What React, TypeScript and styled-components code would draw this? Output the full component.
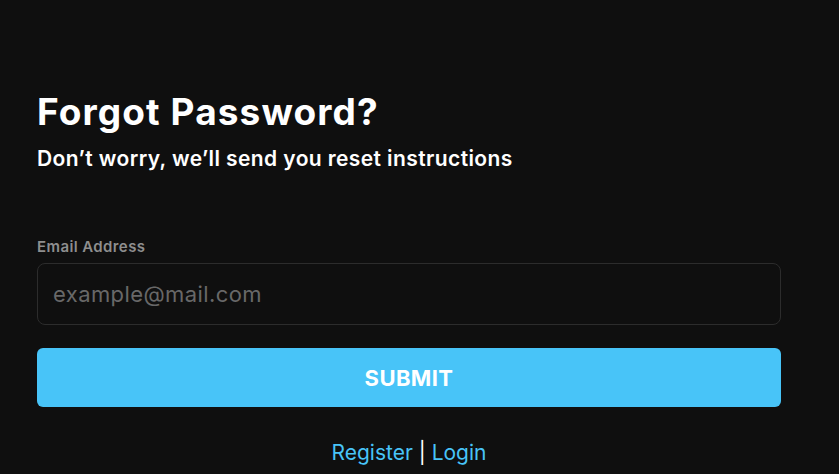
import React from "react";
import styled, { createGlobalStyle } from "styled-components";

const Global = createGlobalStyle`
  html, body {
    margin: 0;
    padding: 0;
    background: #0f0f0f;
    font-family: "Inter", "Open Sans", sans-serif;
  }
`;

const Page = styled.main`
  min-height: 474px;
  padding: 88px 58px 0 37px;
  box-sizing: border-box;
`;

const Title = styled.h1`
  margin: 0;
  color: #ffffff;
  font-size: 37px;
  font-weight: 700;
  line-height: 48px;
  letter-spacing: 1.1px;
`;

const Subtitle = styled.h2`
  margin: 9px 0 0;
  color: #ffffff;
  font-size: 21px;
  font-weight: 600;
  line-height: 28px;
  letter-spacing: 0.4px;
`;

const Form = styled.form`
  margin-top: 64px;
  display: flex;
  flex-direction: column;
`;

const Label = styled.label`
  color: #8e8e8e;
  font-size: 15px;
  font-weight: 600;
  line-height: 20px;
  letter-spacing: 0.4px;
  margin-bottom: 6px;
`;

const Input = styled.input`
  height: 62px;
  box-sizing: border-box;
  background: #0f0f0f;
  border: 1px solid #2c2c2c;
  border-radius: 8px;
  padding: 0 15px;
  color: #fff;
  font-family: inherit;
  font-size: 22px;
  letter-spacing: 0.4px;
  outline: none;

  &::placeholder {
    color: #686868;
  }
`;

const Submit = styled.button`
  margin-top: 23px;
  height: 59px;
  border: none;
  border-radius: 6px;
  background: #48c4f8;
  color: #ffffff;
  font-family: inherit;
  font-size: 22px;
  font-weight: 700;
  letter-spacing: 0.4px;
  cursor: pointer;
`;

const Links = styled.p`
  margin: 32px 0 0;
  text-align: center;
  color: #ffffff;
  font-size: 21px;
  line-height: 28px;
`;

const Link = styled.a`
  color: #48c4f8;
  text-decoration: none;
`;

export default function App() {
  return (
    <>
      <Global />
      <Page>
        <Title>Forgot Password?</Title>
        <Subtitle>Don’t worry, we’ll send you reset instructions</Subtitle>
        <Form onSubmit={e => e.preventDefault()}>
          <Label htmlFor="email">Email Address</Label>
          <Input id="email" type="email" placeholder="example@mail.com" />
          <Submit type="submit">SUBMIT</Submit>
          <Links>
            <Link href="#">Register</Link> | <Link href="#">Login</Link>
          </Links>
        </Form>
      </Page>
    </>
  );
}
